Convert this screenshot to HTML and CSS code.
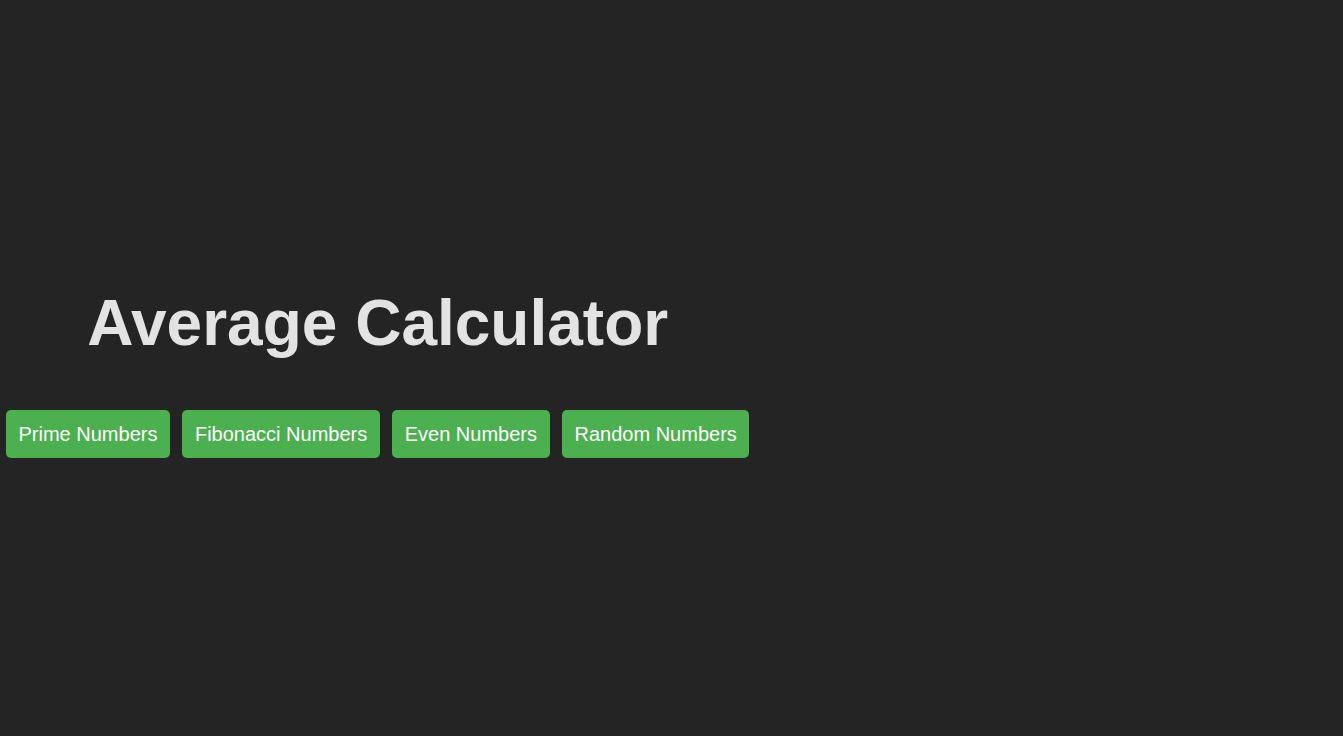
FILE: index.html
```html
<!DOCTYPE html>
<html lang="en">
<head>
<meta charset="utf-8">
<title>Average Calculator</title>
<link rel="stylesheet" href="styles.css">
</head>
<body>
  <main class="app">
    <div class="panel">
      <h1 class="title">Average Calculator</h1>
      <div class="actions">
        <button class="btn">Prime Numbers</button>
        <button class="btn">Fibonacci Numbers</button>
        <button class="btn">Even Numbers</button>
        <button class="btn">Random Numbers</button>
      </div>
    </div>
  </main>
</body>
</html>
```
FILE: styles.css
```css
html, body {
  margin: 0;
  padding: 0;
  background: #242424;
}

body {
  font-family: "Liberation Sans", Arial, sans-serif;
  min-height: 100vh;
}

.app {
  min-height: 100vh;
  display: flex;
  flex-direction: column;
  justify-content: center;
  align-items: flex-start;
  padding-left: 6px;
  box-sizing: border-box;
}

.panel {
  display: flex;
  flex-direction: column;
  align-items: center;
  padding-top: 8px;
}

.title {
  margin: 0 0 50px;
  font-size: 64px;
  font-weight: 700;
  line-height: normal;
  color: #e3e3e3;
}

.actions {
  display: flex;
  gap: 12.5px;
}

.btn {
  font-family: "Liberation Sans", Arial, sans-serif;
  font-size: 20px;
  line-height: 24px;
  color: #ffffff;
  background: #4caf50;
  border: none;
  border-radius: 5px;
  padding: 12px 12.5px;
  cursor: pointer;
}
```
